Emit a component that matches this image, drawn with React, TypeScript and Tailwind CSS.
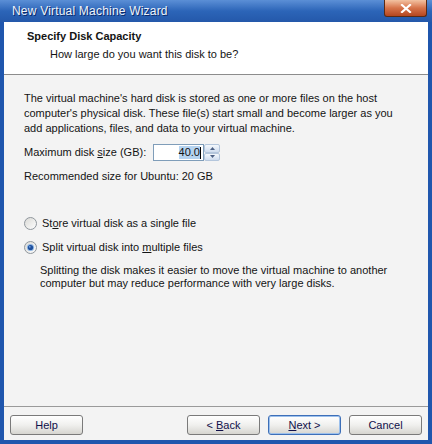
import React from 'react';

const font = { fontFamily: '"Liberation Sans", Arial, sans-serif' };

// radio button drawn like the Luna theme one
const Radio: React.FC<{ checked?: boolean }> = ({ checked }) => (
  <svg width="13" height="13" viewBox="0 0 13 13" className="shrink-0">
    <defs>
      <linearGradient id={checked ? 'rg-on' : 'rg-off'} x1="0" y1="0" x2="1" y2="1">
        <stop offset="0" stopColor="#d8d8d4" />
        <stop offset="1" stopColor="#ffffff" />
      </linearGradient>
    </defs>
    <circle cx="6.5" cy="6.5" r="6" fill={`url(#${checked ? 'rg-on' : 'rg-off'})`} stroke="#8f969c" />
    {checked && (
      <>
        <circle cx="6.5" cy="6.5" r="3.6" fill="#8fb6e3" />
        <circle cx="6.5" cy="6.5" r="2.6" fill="#1e4f9c" />
        <circle cx="5.8" cy="5.8" r="0.9" fill="#6f9ee0" />
      </>
    )}
  </svg>
);

const Button: React.FC<{ children: React.ReactNode; primary?: boolean }> = ({ children, primary }) => (
  <div
    className={
      'w-[73px] h-[20px] rounded-[3px] border flex items-center justify-center text-[11px] text-[#10104a] bg-gradient-to-b from-[#ffffff] via-[#f0f0ee] to-[#d6d5d0] ' +
      (primary ? 'border-[#3d6fb8] shadow-[inset_0_0_0_1px_#9cc0ec]' : 'border-[#7a7a7a]')
    }
  >
    {children}
  </div>
);

export default function App() {
  return (
    <div className="w-[432px] h-[444px] flex flex-col bg-[#1f56ad] overflow-hidden" style={font}>
      {/* title bar */}
      <div className="h-[22px] shrink-0 flex items-start justify-between bg-gradient-to-b from-[#5b8fd6] via-[#2c65b8] to-[#2458aa]">
        <span className="pl-[12px] pt-[4px] text-[12px] leading-[14px] tracking-[0.2px] text-[#eef3fb] [text-shadow:1px_1px_0_#0b2a6a]">
          New Virtual Machine Wizard
        </span>
        <div className="mr-[5px] w-[43px] h-[17px] rounded-b-[3px] border border-t-0 border-[#5a2a14] bg-gradient-to-b from-[#f2c2a2] via-[#d6734a] to-[#b4461f] flex items-center justify-center">
          <svg width="12" height="9" viewBox="0 0 12 9">
            <path d="M2 1 L10 8 M10 1 L2 8" stroke="#ffffff" strokeWidth="2.2" strokeLinecap="square" />
          </svg>
        </div>
      </div>

      {/* client area */}
      <div className="flex-1 flex flex-col mx-[4px] mb-[4px] bg-[#f3f3f3] text-[11px] text-[#141414]">
        <div className="h-[53px] shrink-0 bg-white border-b border-[#8c8c8c] pl-[23px] pt-[7px]">
          <div className="font-bold leading-[15px]">Specify Disk Capacity</div>
          <div className="pl-[23px] leading-[15px] mt-[3px]">How large do you want this disk to be?</div>
        </div>

        <div className="flex-1 px-[20px] pt-[16px] leading-[15px]">
          <p>
            The virtual machine's hard disk is stored as one or more files on the host computer's physical disk. These
            file(s) start small and become larger as you add applications, files, and data to your virtual machine.
          </p>

          <div className="mt-[8px] flex items-center h-[17px]">
            <span className="w-[129px]">
              Maximum disk <span className="underline">s</span>ize (GB):
            </span>
            <div className="w-[51px] h-[17px] bg-white border border-[#7f9db9] overflow-hidden flex items-center justify-end pr-[2px]">
              <span className="bg-[#b5d3f0] leading-[13px]">40.0</span>
              <span className="w-px h-[12px] bg-black" />
            </div>
            <div className="w-[16px] h-[17px] flex flex-col">
              <div className="flex-1 border border-[#b4c6dc] rounded-[2px] bg-gradient-to-b from-[#f4f8fc] to-[#cfdcee] flex items-center justify-center">
                <svg width="5" height="3" viewBox="0 0 5 3"><path d="M0 3 L2.5 0 L5 3 Z" fill="#4d6185" /></svg>
              </div>
              <div className="flex-1 border border-[#b4c6dc] rounded-[2px] bg-gradient-to-b from-[#f4f8fc] to-[#cfdcee] flex items-center justify-center">
                <svg width="5" height="3" viewBox="0 0 5 3"><path d="M0 0 L2.5 3 L5 0 Z" fill="#4d6185" /></svg>
              </div>
            </div>
          </div>

          <div className="mt-[8px]">Recommended size for Ubuntu: 20 GB</div>

          <div className="mt-[32px] flex items-center gap-[5px]">
            <Radio />
            <span>
              St<span className="underline">o</span>re virtual disk as a single file
            </span>
          </div>
          <div className="mt-[9px] flex items-center gap-[5px]">
            <Radio checked />
            <span>
              Split virtual disk into <span className="underline">m</span>ultiple files
            </span>
          </div>
          <p className="mt-[9px] pl-[16px] leading-[13px]">
            Splitting the disk makes it easier to move the virtual machine to another computer but may reduce
            performance with very large disks.
          </p>
        </div>

        <div className="shrink-0 border-t border-[#9a9a9a] px-[6px] pt-[8px] pb-[5px] flex justify-between">
          <Button>Help</Button>
          <div className="flex gap-[8px]">
            <Button>
              &lt; <span className="underline ml-[3px]">B</span>ack
            </Button>
            <Button primary>
              <span className="underline">N</span>ext &gt;
            </Button>
            <Button>Cancel</Button>
          </div>
        </div>
      </div>
    </div>
  );
}
